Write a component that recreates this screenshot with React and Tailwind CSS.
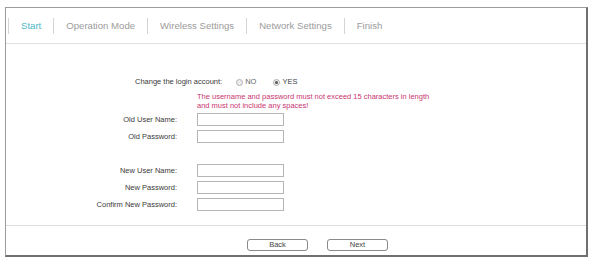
import React from "react";

const tabs = ["Start", "Operation Mode", "Wireless Settings", "Network Settings", "Finish"];

const Field = ({ label, className = "" }) => (
  <div className={`flex items-center ${className}`}>
    <span className="w-[172px] text-right pr-[1px]">{label}</span>
    <input className="ml-[19px] w-[87px] h-[13px] border border-[#b5b5b5] bg-white outline-none" />
  </div>
);

const Radio = ({ checked }) => (
  <span className="w-[7px] h-[7px] rounded-full border border-[#b0b0b0] bg-[#ececec] flex items-center justify-center">
    {checked && <span className="w-[3px] h-[3px] rounded-full bg-[#555]" />}
  </span>
);

export default function App() {
  return (
    <div
      className="w-[594px] h-[265px] bg-white pt-[7px] pl-[5px]"
      style={{ fontFamily: '"Liberation Sans", Arial, sans-serif' }}
    >
      <div className="w-[583px] h-[250px] flex flex-col border-t border-l border-t-[#9c9c9c] border-l-[#9c9c9c] border-r-2 border-b-2 border-r-[#707070] border-b-[#707070]">
        {/* Tabs */}
        <div className="h-[36px] flex items-center pl-[2px] border-b border-[#e0e0e0]">
          {tabs.map((t, i) => (
            <span
              key={t}
              className={`px-3 h-4 leading-4 border-l border-[#d4d4d4] text-[9.6px] ${
                i === 0 ? "text-[#4bb8c7]" : "text-[#9b9b9b]"
              }`}
            >
              {t}
            </span>
          ))}
        </div>

        {/* Form */}
        <div className="flex-1 text-[7.5px] text-[#3a3a3a]">
          <div className="flex items-center mt-[33px] ml-[129px] h-[10px]">
            <span>Change the login account:</span>
            <span className="ml-[14px] flex items-center gap-[2px] text-[#666]">
              <Radio />
              NO
            </span>
            <span className="ml-[17px] flex items-center gap-[2px] text-[#444]">
              <Radio checked />
              YES
            </span>
          </div>
          <p className="ml-[191px] mt-[5px] leading-[9px] text-[#c93571] whitespace-nowrap">
            The username and password must not exceed 15 characters in length
            <br />
            and must not include any spaces!
          </p>
          <Field label="Old User Name:" className="mt-[3px]" />
          <Field label="Old Password:" className="mt-[4px]" />
          <Field label="New User Name:" className="mt-[21px]" />
          <Field label="New Password:" className="mt-[4px]" />
          <Field label="Confirm New Password:" className="mt-[4px]" />
        </div>

        {/* Footer */}
        <div className="h-[30px] border-t border-[#dcdcdc] flex items-start pt-[13px] pl-[241px] gap-[19px] text-[7.5px] text-[#444]">
          <button className="w-[61px] h-[12px] rounded-[3px] border border-[#8a8a8a] bg-white leading-[10px]">
            Back
          </button>
          <button className="w-[61px] h-[12px] rounded-[3px] border border-[#8a8a8a] bg-white leading-[10px]">
            Next
          </button>
        </div>
      </div>
    </div>
  );
}
